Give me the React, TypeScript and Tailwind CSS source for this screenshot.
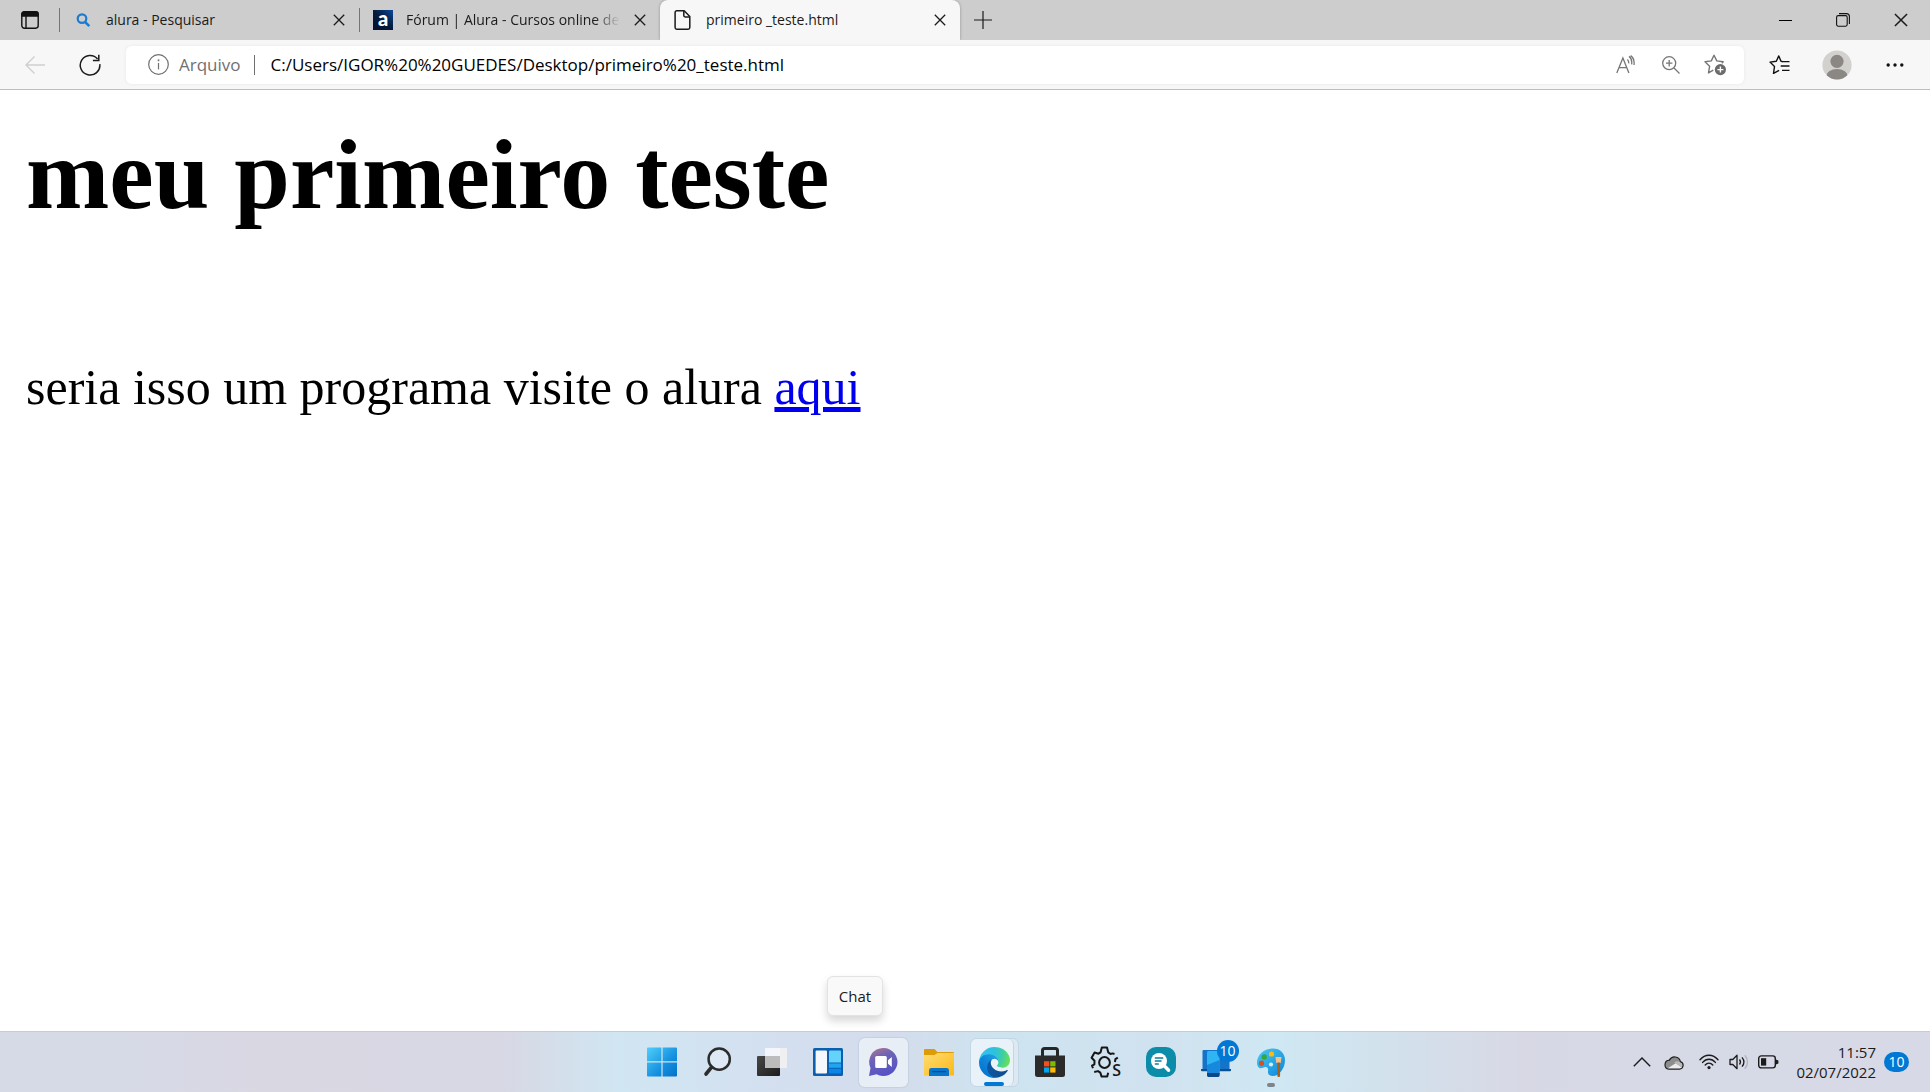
import React from 'react';

interface IconButtonProps {
  label: string;
  className?: string;
  children: React.ReactNode;
}

const IconButton: React.FC<IconButtonProps> = ({ label, className = '', children }) => (
  <button type="button" aria-label={label} className={`flex shrink-0 items-center justify-center ${className}`}>
    {children}
  </button>
);

const CloseIcon = ({ size = 12 }: { size?: number }) => (
  <svg width={size} height={size} viewBox="0 0 12 12" fill="none" stroke="#1b1b1b" strokeWidth="1.3">
    <path d="M.8.8l10.4 10.4M11.2.8L.8 11.2" />
  </svg>
);

/* Browser tabs */

const SearchFavicon = () => (
  <svg width="20" height="20" viewBox="0 0 20 20" fill="none" stroke="#1b7bd0" strokeWidth="2.2">
    <circle cx="9" cy="8.6" r="4.3" />
    <path d="M12 11.8l4.3 4.3" strokeWidth="2.6" />
  </svg>
);

const AluraFavicon = () => (
  <span className="flex size-5 items-center justify-center bg-linear-to-bl from-[#0b4a9e] via-[#051a3c] to-[#04132c] pb-1 font-['Lato',sans-serif] text-xl leading-4 font-black text-white">
    a
  </span>
);

const FileFavicon = () => (
  <svg width="20" height="20" viewBox="0 0 20 20" fill="none" stroke="#1b1b1b" strokeWidth="1.5" strokeLinejoin="round">
    <path d="M3.8.8h7.4l5.6 5.8v10.9c0 1-.7 1.7-1.7 1.7H3.8c-1 0-1.7-.7-1.7-1.7v-15c0-1 .7-1.7 1.7-1.7z" />
    <path d="M10.8 1v4.6c0 .8.6 1.4 1.4 1.4h4.4" />
  </svg>
);

interface TabProps {
  title: string;
  icon: React.ReactNode;
  active?: boolean;
  divider?: boolean;
}

const Tab: React.FC<TabProps> = ({ title, icon, active, divider }) => (
  <div
    className={`flex h-10 w-[300px] min-w-0 items-center pl-[13px] ${
      active ? 'rounded-t-lg bg-[#f7f7f7] shadow-[0_0_3px_rgba(0,0,0,0.3)]' : ''
    }`}
  >
    {icon}
    <span
      className={`ml-[13px] min-w-0 flex-1 text-sm whitespace-nowrap ${
        title.length > 25 ? '[mask-image:linear-gradient(to_right,black_88%,transparent)]' : ''
      }`}
    >
      {title}
    </span>
    <IconButton label={`Fechar ${title}`} className="h-10 w-10">
      <CloseIcon />
    </IconButton>
    {divider && <span className="h-6 w-px shrink-0 bg-[#757575]" />}
  </div>
);

const TabStrip = () => (
  <header className="flex h-10 items-center bg-[#cdcdcd]">
    <IconButton label="Menu de guias" className="h-10 w-[59px]">
      <svg width="18" height="18" viewBox="0 0 18 18" fill="none" stroke="#111" strokeWidth="1.4">
        <rect x=".8" y=".8" width="16.4" height="16.4" rx="2.6" />
        <path d="M1 2.8C1 1.7 1.8 1 2.8 1h12.4c1 0 1.8.7 1.8 1.8V5H1z" fill="#111" />
        <path d="M5 5v12" />
      </svg>
    </IconButton>
    <span className="h-6 w-px bg-[#757575]" />
    <Tab title="alura - Pesquisar" icon={<SearchFavicon />} divider />
    <Tab title="Fórum | Alura - Cursos online de" icon={<AluraFavicon />} />
    <Tab title="primeiro _teste.html" icon={<FileFavicon />} active />
    <IconButton label="Nova guia" className="h-10 w-[46px]">
      <svg width="18" height="18" viewBox="0 0 18 18" fill="none" stroke="#1b1b1b" strokeWidth="1.2">
        <path d="M9 0v18M0 9h18" />
      </svg>
    </IconButton>
    <div className="ml-auto flex">
      <IconButton label="Minimizar" className="h-10 w-[58px]">
        <span className="h-px w-[13px] bg-black" />
      </IconButton>
      <IconButton label="Restaurar" className="h-10 w-[58px]">
        <svg width="14" height="14" viewBox="0 0 14 14" fill="none" stroke="#111" strokeWidth="1.1">
          <rect x=".6" y="2.6" width="10.6" height="10.6" rx="1.6" />
          <path d="M3 .6h7.4c1.7 0 3 1.3 3 3V11" />
        </svg>
      </IconButton>
      <IconButton label="Fechar" className="h-10 w-[58px]">
        <CloseIcon size={14} />
      </IconButton>
    </div>
  </header>
);

/* Toolbar */

const Toolbar = () => (
  <div className="relative flex h-[50px] items-center border-b border-[#bdbdbd] bg-[#f7f7f7] pr-1.5 pl-2">
    <IconButton label="Voltar" className="h-10 w-[54px]">
      <svg width="20" height="18" viewBox="0 0 20 18" fill="none" stroke="#cfcfcf" strokeWidth="1.4">
        <path d="M20 9H1M9.5.6L1 9l8.5 8.4" />
      </svg>
    </IconButton>
    <IconButton label="Atualizar" className="h-10 w-14">
      <svg width="22" height="22" viewBox="0 0 22 22" fill="none" stroke="#1b1b1b" strokeWidth="1.5">
        <path d="M20.8 10.2A9.8 9.8 0 1 1 18.6 5" />
        <path d="M19.8.8v5.7h-5.9" />
      </svg>
    </IconButton>
    <div className="mr-1.5 ml-2 flex h-[38px] min-w-0 flex-1 items-center rounded-md bg-white pr-1.5 pl-[22px] shadow-[0_0_4px_rgba(0,0,0,0.06)]">
      <svg width="21" height="21" viewBox="0 0 21 21" fill="none" stroke="#707070" strokeWidth="1.2" className="shrink-0">
        <circle cx="10.5" cy="10.5" r="9.8" />
        <path d="M10.5 9v6.4" />
        <path d="M10.5 5.4v1.8" strokeWidth="1.6" />
      </svg>
      <label htmlFor="address" className="ml-2.5 text-[17px] text-[#707070]">
        Arquivo
      </label>
      <span className="mr-4 ml-[13px] h-5 w-px bg-[#707070]" />
      <input
        id="address"
        type="text"
        defaultValue="C:/Users/IGOR%20%20GUEDES/Desktop/primeiro%20_teste.html"
        className="min-w-0 flex-1 bg-transparent text-[17px] text-black outline-none"
      />
      <IconButton label="Ler em voz alta" className="h-9 w-[45px]">
        <svg width="19" height="20" viewBox="0 0 19 20" fill="none" stroke="#767676" strokeWidth="1.3">
          <path d="M.8 18L6.9 3l6 15M3 12.6h7.8" />
          <path d="M11.4 4.4c1 .9 1.5 2.2 1.3 4M13 1.4c2.3 1.6 3.2 4.2 2.6 8M14.6.6c2.800 2 4 5 3.400 9.400" />
        </svg>
      </IconButton>
      <IconButton label="Ampliar" className="h-9 w-[45px]">
        <svg width="18" height="18" viewBox="0 0 18 18" fill="none" stroke="#767676" strokeWidth="1.3">
          <circle cx="7.2" cy="7.2" r="6.5" />
          <path d="M12 12l5.5 5.5M7.2 4v6.4M4 7.2h6.4" />
        </svg>
      </IconButton>
      <IconButton label="Adicionar aos favoritos" className="h-9 w-[45px]">
        <svg width="23" height="22" viewBox="0 0 23 22" fill="none" stroke="#767676" strokeWidth="1.4" strokeLinejoin="round">
          <path d="M9.300 16.100l-4.800 2.800 1.100-6.600L1 7.800l6.300-.9L10 1.200l2.800 5.700 6.400.9-1.400 1.400" />
          <circle cx="16.4" cy="15.6" r="5.6" fill="#6b6b6b" stroke="none" />
          <path d="M16.4 12.6v6M13.4 15.6h6" stroke="#fff" />
        </svg>
      </IconButton>
    </div>
    <IconButton label="Favoritos" className="h-10 w-[58px]">
      <svg width="21" height="20" viewBox="0 0 21 20" fill="none" stroke="#111" strokeWidth="1.4" strokeLinejoin="round">
        <path d="M13.6 6.6L12 6.2 9.8.9 7.3 6.2 1 7.1l4.5 4.5-1 6.8 5.6-3" />
        <path d="M13 6.6h7.5M11.7 11h8.8M13 15.4h7.5" />
      </svg>
    </IconButton>
    <IconButton label="Perfil" className="h-10 w-[58px]">
      <svg width="30" height="30" viewBox="0 0 30 30" fill="#8b8785">
        <clipPath id="avatar">
          <circle cx="15" cy="15" r="14.6" />
        </clipPath>
        <circle cx="15" cy="15" r="14.6" fill="#d3d1cd" />
        <circle cx="15" cy="11.3" r="6.6" />
        <ellipse cx="15" cy="26" rx="10.6" ry="7" clipPath="url(#avatar)" />
      </svg>
    </IconButton>
    <IconButton label="Configurações e mais" className="h-10 w-[58px]">
      <svg width="18" height="4" viewBox="0 0 18 4" fill="#111">
        <circle cx="2.2" cy="2" r="1.7" />
        <circle cx="9" cy="2" r="1.7" />
        <circle cx="15.8" cy="2" r="1.7" />
      </svg>
    </IconButton>
  </div>
);

/* Taskbar icons, all drawn on a 30px square */

const StartIcon = () => (
  <svg width="30" height="30" viewBox="0 0 30 30">
    <defs>
      <linearGradient id="start" x1="0" y1="0" x2="30" y2="30" gradientUnits="userSpaceOnUse">
        <stop stopColor="#4fd0fb" />
        <stop offset=".6" stopColor="#1590df" />
        <stop offset="1" stopColor="#0570c8" />
      </linearGradient>
    </defs>
    <path fill="url(#start)" d="M1 .5h13.4v13.8H0V1.5a1 1 0 0 1 1-1zM15.6.5H29a1 1 0 0 1 1 1v12.8H15.6zM0 15.6h14.4v13.9H1a1 1 0 0 1-1-1zM15.6 15.6H30v12.9a1 1 0 0 1-1 1H15.6z" />
  </svg>
);

const SearchIcon = () => (
  <svg width="30" height="30" viewBox="0 0 30 30" fill="none" stroke="#2c2c2c" strokeLinecap="round">
    <circle cx="17.2" cy="12.2" r="10.6" strokeWidth="2.5" fill="#fff" fillOpacity=".25" />
    <path d="M9.6 20.2L4 27" strokeWidth="3.6" />
  </svg>
);

const TaskViewIcon = () => (
  <svg width="30" height="30" viewBox="0 0 30 30">
    <defs>
      <linearGradient id="task" x1="0" y1="0" x2="1" y2="1">
        <stop stopColor="#484848" />
        <stop offset="1" stopColor="#1c1c1c" />
      </linearGradient>
    </defs>
    <rect x="0" y="9" width="23" height="20" rx="1" fill="url(#task)" />
    <rect x="8" y="1" width="22" height="20" rx="1" fill="#fff" fillOpacity=".72" />
    <rect x="23" y="1" width="7" height="20" rx="1" fill="#ececec" fillOpacity=".7" />
    <rect x="8" y="9" width="15" height="12" fill="#bcbcbc" />
  </svg>
);

const WidgetsIcon = () => (
  <svg width="30" height="30" viewBox="0 0 30 30">
    <rect y="1" width="30" height="28" rx="1.5" fill="#0b5fae" />
    <rect x="2.6" y="3.5" width="11.4" height="23" rx="1" fill="#f4f7fb" />
    <path d="M16 4.5a1 1 0 0 1 1-1h10a1 1 0 0 1 1 1v11H16z" fill="#63d3fb" />
    <path d="M16 16.4h12v4.4H16z" fill="#1fa4f3" />
    <path d="M16 21.8h12v3.7a1 1 0 0 1-1 1H17a1 1 0 0 1-1-1z" fill="#0b86e6" />
  </svg>
);

const ChatIcon = () => (
  <svg width="30" height="30" viewBox="0 0 30 30">
    <defs>
      <linearGradient id="chat" x1=".2" y1="0" x2=".6" y2="1">
        <stop stopColor="#ab7496" />
        <stop offset=".35" stopColor="#6c63b5" />
        <stop offset="1" stopColor="#5551c8" />
      </linearGradient>
    </defs>
    <path d="M15.5 1A14 14 0 1 1 8.6 27.2L1 29l1.5-8A14 14 0 0 1 15.5 1z" fill="url(#chat)" />
    <rect x="7.2" y="9" width="11.6" height="12" rx="1.5" fill="#fff" />
    <path d="M20 13.2l3.8-3.3v10.2L20 16.8z" fill="#fff" />
  </svg>
);

const ExplorerIcon = () => (
  <svg width="30" height="30" viewBox="0 0 30 30">
    <defs>
      <linearGradient id="folder" x1="0" y1="0" x2="1" y2="1">
        <stop stopColor="#ffdc72" />
        <stop offset="1" stopColor="#fbb816" />
      </linearGradient>
    </defs>
    <path d="M0 3a1 1 0 0 1 1-1h9.5l3 3H29a1 1 0 0 1 1 1v6H0z" fill="#dc9c07" />
    <path d="M0 8h10.5l3-2H30v22.6H0z" fill="url(#folder)" />
    <path d="M5 29v-5.6A2.4 2.4 0 0 1 7.4 21h15.2a2.4 2.4 0 0 1 2.4 2.4V29z" fill="#0875ca" />
    <path d="M8.5 24.7h13" stroke="#084b8b" strokeWidth="1.2" strokeLinecap="round" />
  </svg>
);

const EdgeIcon = () => (
  <svg width="31" height="31" viewBox="0 0 256 256">
    <defs>
      <linearGradient id="edgeDark" x1="63" y1="178" x2="242" y2="178" gradientUnits="userSpaceOnUse">
        <stop stopColor="#0c59a4" />
        <stop offset="1" stopColor="#114a8b" />
      </linearGradient>
      <linearGradient id="edgeBlue" x1="157" y1="100" x2="46" y2="222" gradientUnits="userSpaceOnUse">
        <stop stopColor="#1b9de2" />
        <stop offset=".5" stopColor="#0f85d8" />
        <stop offset="1" stopColor="#0577d2" />
      </linearGradient>
      <radialGradient id="edgeGreen" cx="26" cy="47" r="230" gradientUnits="userSpaceOnUse">
        <stop stopColor="#35c1f1" />
        <stop offset=".45" stopColor="#2dc0df" />
        <stop offset=".75" stopColor="#3fcfa2" />
        <stop offset="1" stopColor="#66e05a" />
      </radialGradient>
    </defs>
    <path fill="url(#edgeDark)" d="M231 190.5c-3.4 1.8-6.9 3.4-10.5 4.7a101.5 101.5 0 0 1-35.6 6.4c-47 0-87.9-32.3-87.9-73.8.1-11.4 6.4-21.9 16.4-27.3-42.5 1.8-53.4 46.1-53.4 72 0 73.4 67.6 80.8 82.2 80.8 7.9 0 19.7-2.3 26.9-4.6l1.3-.4a128.3 128.3 0 0 0 66.6-52.8 4 4 0 0 0-6-5z" />
    <path fill="url(#edgeBlue)" d="M105.7 241.4a79.2 79.2 0 0 1-22.7-21.3 80.7 80.7 0 0 1 29.5-120c3.2-1.5 8.5-4.1 15.6-4a32.4 32.4 0 0 1 25.7 13 31.9 31.9 0 0 1 6.3 18.7c0-.2 24.5-79.6-80-79.6-43.9 0-80 41.7-80 78.2a130.2 130.2 0 0 0 12.1 56 128 128 0 0 0 156.4 67.1 75.5 75.5 0 0 1-62.8-8z" />
    <path fill="url(#edgeGreen)" d="M152.3 148.9c-.9 1-3.4 2.5-3.4 5.6 0 2.6 1.7 5.2 4.8 7.3 14.3 10 41.4 8.6 41.5 8.6 10.7 0 21.1-2.9 30.3-8.3a61.4 61.4 0 0 0 30.4-52.9c.3-22.4-8-37.3-11.3-43.9C223.5 23.9 177.7 0 128 0A128 128 0 0 0 0 126.2c.5-36.5 36.8-66 80-66 3.5 0 23.5.3 42 10.1 16.3 8.6 24.9 18.9 30.8 29.2 6.2 10.7 7.3 24.1 7.3 29.5s-2.7 13.3-7.8 19.9z" />
  </svg>
);

const StoreIcon = () => (
  <svg width="30" height="30" viewBox="0 0 30 30">
    <path d="M7.5 10V3.6c0-1.300.8-2.100 2.100-2.100h10.800c1.300 0 2.100.8 2.100 2.100V10" fill="none" stroke="#262626" strokeWidth="3" />
    <path d="M0 8.5h30v19a2.5 2.5 0 0 1-2.5 2.5h-25A2.5 2.5 0 0 1 0 27.5z" fill="#2b2b2b" />
    <path d="M9 14.2h5.3v5.2H9z" fill="#f25022" />
    <path d="M15.2 14.2h5.3v5.2h-5.3z" fill="#7fba00" />
    <path d="M9 20.4h5.3v5.2H9z" fill="#00a4ef" />
    <path d="M15.2 20.4h5.3v5.2h-5.3z" fill="#ffb900" />
  </svg>
);

const GearIcon = () => (
  <span className="relative">
    <svg width="30" height="32" viewBox="0 0 30 32" fill="none" stroke="#161616" strokeWidth="2" strokeLinejoin="round">
      <circle cx="14.5" cy="16.5" r="5.4" />
      <path d="M24.500 8l-2-.6-2 .6-2.200-1.600-1.300-4.900h-5.200l-1.200 4.800-2.100 1.400-3.900-1.200-3 5.200 2.900 3-.1 3.600-2.400 1.300 1 2.600M4.200 26l3.800-.9 2.300 1.500 1.300 4h5.600l1-3.800" />
      <path d="M27.800 11.600l-2.400 1.600-.5 2.800" />
    </svg>
    <span className="absolute -right-px bottom-0 text-base leading-4 font-semibold text-[#161616]">S</span>
  </span>
);

const SupportIcon = () => (
  <svg width="30" height="30" viewBox="0 0 30 30">
    <rect width="30" height="30" rx="10" fill="#0b8ca8" />
    <circle cx="13" cy="14" r="8" fill="#fff" />
    <path d="M18 18.5l4.6 4.8" stroke="#fff" strokeWidth="3.4" strokeLinecap="round" />
    <path d="M8.8 11h8.4M8.8 14h6.8M8.8 17h4" stroke="#0b7f9b" strokeWidth="1.5" />
  </svg>
);

const PhoneLinkIcon = () => (
  <svg width="30" height="30" viewBox="0 0 30 30">
    <path d="M1.5 4a1 1 0 0 1 1-1h25a1 1 0 0 1 1 1v19h-27z" fill="#1474c8" />
    <path d="M0 22h30v1.2a1 1 0 0 1-1 1H1a1 1 0 0 1-1-1z" fill="#0d4f94" />
    <rect x="6" y="4" width="12.6" height="25" rx="1.4" fill="#2fb4f4" />
    <path d="M6 18l12.6-5v14H6z" fill="#1689dc" />
    <path d="M6 26h12.6v2.6a1.4 1.4 0 0 1-1.4 1.4H7.4A1.4 1.4 0 0 1 6 28.6z" fill="#0c4788" />
  </svg>
);

const PaintIcon = () => (
  <svg width="30" height="30" viewBox="0 0 30 30">
    <defs>
      <linearGradient id="palette" x1="0" y1="0" x2="1" y2="1">
        <stop stopColor="#49c9f5" />
        <stop offset="1" stopColor="#0f86d8" />
      </linearGradient>
    </defs>
    <path d="M17 1.5c7 0 12 4.8 12 11.5 0 8-5.5 16-12.5 16-3.5 0-5-2-4.5-5 .4-2.4-.4-4-2.4-4-2.2 0-3 1.3-4.800 1.3C2.3 21.3 1 18.6 1 15.5 1 7.6 8.5 1.5 17 1.5z" fill="url(#palette)" />
    <circle cx="15.5" cy="7" r="2.6" fill="#f8bd12" />
    <circle cx="8.2" cy="10" r="2.7" fill="#35a83b" />
    <circle cx="5.5" cy="16.2" r="2.6" fill="#d84f20" />
    <circle cx="15" cy="17.5" r="2.1" fill="#d5edf9" />
    <path d="M19.5 10h6l-.8 6h-4.4z" fill="#f0c491" />
    <path d="M21.3 15.5h2.8v13.3c0 1.6-2.8 1.6-2.8 0z" fill="#a4601f" />
  </svg>
);

const TILE = 'relative flex h-[49px] w-[49px] items-center justify-center rounded-md';

const TaskbarApps = () => (
  <nav aria-label="Aplicativos" className="flex w-[662px] items-center justify-between pl-[3px]">
    <button type="button" aria-label="Iniciar" className={TILE}><StartIcon /></button>
    <button type="button" aria-label="Pesquisar" className={TILE}><SearchIcon /></button>
    <button type="button" aria-label="Visão de tarefas" className={TILE}><TaskViewIcon /></button>
    <button type="button" aria-label="Widgets" className={TILE}><WidgetsIcon /></button>
    <button
      type="button"
      aria-describedby="chat-tip"
      className={`${TILE} bg-[#e8eef6] shadow-[0_0_1px_1px_rgba(120,140,170,0.15)]`}
    >
      <ChatIcon />
      <span
        id="chat-tip"
        role="tooltip"
        className="absolute bottom-full -left-8 mb-[22px] rounded-md border border-[#e3e3e3] bg-[#f9f9f9] px-[11px] py-[9px] text-[15px] leading-5 text-[#1b1b1b] shadow-[0_5px_8px_rgba(0,0,0,0.16)]"
      >
        Chat
      </span>
    </button>
    <button type="button" aria-label="Explorador de Arquivos" className={TILE}><ExplorerIcon /></button>
    <button type="button" aria-label="Microsoft Edge" className={`${TILE} border border-[#c3d6e3] bg-[#dde9f2]`}>
      <span className="absolute inset-y-0 left-0 w-[43px] rounded-md border-r border-[#c3d6e3] bg-[#e9f2f8]" />
      <span className="relative"><EdgeIcon /></span>
      <span className="absolute bottom-0 h-1 w-5 rounded-full bg-[#0078d4]" />
    </button>
    <button type="button" aria-label="Microsoft Store" className={TILE}><StoreIcon /></button>
    <button type="button" aria-label="Configurações" className={TILE}><GearIcon /></button>
    <button type="button" aria-label="Suporte" className={TILE}><SupportIcon /></button>
    <button type="button" aria-label="Vincular ao celular" className={TILE}>
      <PhoneLinkIcon />
      <span className="absolute top-0.5 right-0.5 flex size-[22px] items-center justify-center rounded-full bg-[#0078d4] text-sm text-white">
        10
      </span>
    </button>
    <button type="button" aria-label="Paint" className={TILE}>
      <PaintIcon />
      <span className="absolute bottom-0 h-1 w-2 rounded-full bg-[#7d848a]" />
    </button>
  </nav>
);

const SystemTray = () => (
  <div className="flex items-center justify-end pr-[21px] text-[#1b1b1b]">
    <IconButton label="Mostrar ícones ocultos" className="w-[29px]">
      <svg width="18" height="10" viewBox="0 0 18 10" fill="none" stroke="#1b1b1b" strokeWidth="1.4">
        <path d="M.8 9.2L9 1l8.2 8.2" />
      </svg>
    </IconButton>
    <IconButton label="OneDrive" className="w-[35px]">
      <svg width="20" height="15" viewBox="0 0 20 15">
        <path d="M4.7 14.2h10.8a3.9 3.9 0 0 0 .9-7.6 5.9 5.9 0 0 0-11-1.5A4.6 4.6 0 0 0 4.7 14.2z" fill="#8d8d8d" />
        <path d="M3 13.8l8.6-5.6 6.8 4.6-2.9 1.4H4.7z" fill="#ececec" />
        <path d="M10 7.3l3-1 4.5.7 1.6 3.2-.6 2.6z" fill="#b9b9b9" />
        <path d="M4.7 14.2h10.8a3.9 3.9 0 0 0 .9-7.6 5.9 5.9 0 0 0-11-1.5A4.6 4.6 0 0 0 4.7 14.2z" fill="none" stroke="#222" strokeWidth="1.2" />
      </svg>
    </IconButton>
    <IconButton label="Wi-Fi" className="w-[35px]">
      <svg width="20" height="16" viewBox="0 0 20 16" fill="none" stroke="#1b1b1b" strokeWidth="1.4" strokeLinecap="round">
        <path d="M1 5.8c5-6 13-6 18 0M3.6 8.4c3.7-4.2 9.1-4.2 12.8 0M6.2 11c2.2-2.5 5.4-2.5 7.6 0" />
        <circle cx="10" cy="13.6" r="1.6" fill="#1b1b1b" stroke="none" />
      </svg>
    </IconButton>
    <IconButton label="Volume" className="w-[25px]">
      <svg width="20" height="16" viewBox="0 0 20 16" fill="none" stroke="#1b1b1b" strokeWidth="1.3" strokeLinejoin="round">
        <path d="M1 5.5h2.8L8 1.3v13.4l-4.200-4.2H1z" />
        <path d="M10.5 5.5c1.2 1.5 1.2 3.5 0 5M13 3.3c2.3 2.8 2.3 6.6 0 9.4" />
        <path d="M15.8 1.2c3.6 4 3.6 9.6 0 13.6" stroke="#b0b3bc" />
      </svg>
    </IconButton>
    <IconButton label="Bateria" className="w-[35px]">
      <svg width="21" height="14" viewBox="0 0 21 14">
        <rect x=".7" y=".9" width="16.6" height="12" rx="2.6" fill="none" stroke="#1b1b1b" strokeWidth="1.4" />
        <rect x="3" y="3.2" width="5.2" height="7.4" fill="#1b1b1b" />
        <path d="M18 4.4l2.4 1v3l-2.4 1z" fill="#1b1b1b" />
      </svg>
    </IconButton>
    <button type="button" aria-label="Data e hora" className="w-[90px] text-right text-[15px] leading-5">
      <time className="block">11:57</time>
      <time className="block">02/07/2022</time>
    </button>
    <button type="button" aria-label="Notificações" className="ml-2 flex h-5 w-[25px] items-center justify-center rounded-full bg-[#0078d4] text-sm text-white">
      10
    </button>
  </div>
);

const Taskbar = () => (
  <footer className="grid h-[61px] grid-cols-[1fr_auto_1fr] items-center border-t border-[#c5ccd8] bg-[linear-gradient(90deg,#d6d9e6_0%,#d7d9e6_8%,#d9d7e2_14%,#d7d8e4_26%,#d0e6f2_32%,#d3e1f0_38%,#d4dcec_46%,#cde4ef_52%,#d1e2ef_60%,#cfe8f3_66%,#d2e1ec_72%,#d8d8e5_79%,#d6dae6_88%,#d8d9e6_100%)]">
    <div />
    <TaskbarApps />
    <SystemTray />
  </footer>
);

const App = () => {
  return (
    <div className="flex min-h-screen flex-col bg-white font-['Open_Sans','Noto_Sans',sans-serif] text-[#1b1b1b]">
      <TabStrip />
      <Toolbar />
      <main className="flex-1 px-[26px] pt-[27px] font-['Liberation_Serif','Times_New_Roman',serif] text-black">
        <h1 className="text-[100px] leading-[115px] font-bold">meu primeiro teste</h1>
        <p className="mt-[126px] text-[50px] leading-[58px]">
          seria isso um programa visite o alura{' '}
          <a href="#" className="text-[#0000ee] underline">
            aqui
          </a>
        </p>
      </main>
      <Taskbar />
    </div>
  );
};

export default App;
